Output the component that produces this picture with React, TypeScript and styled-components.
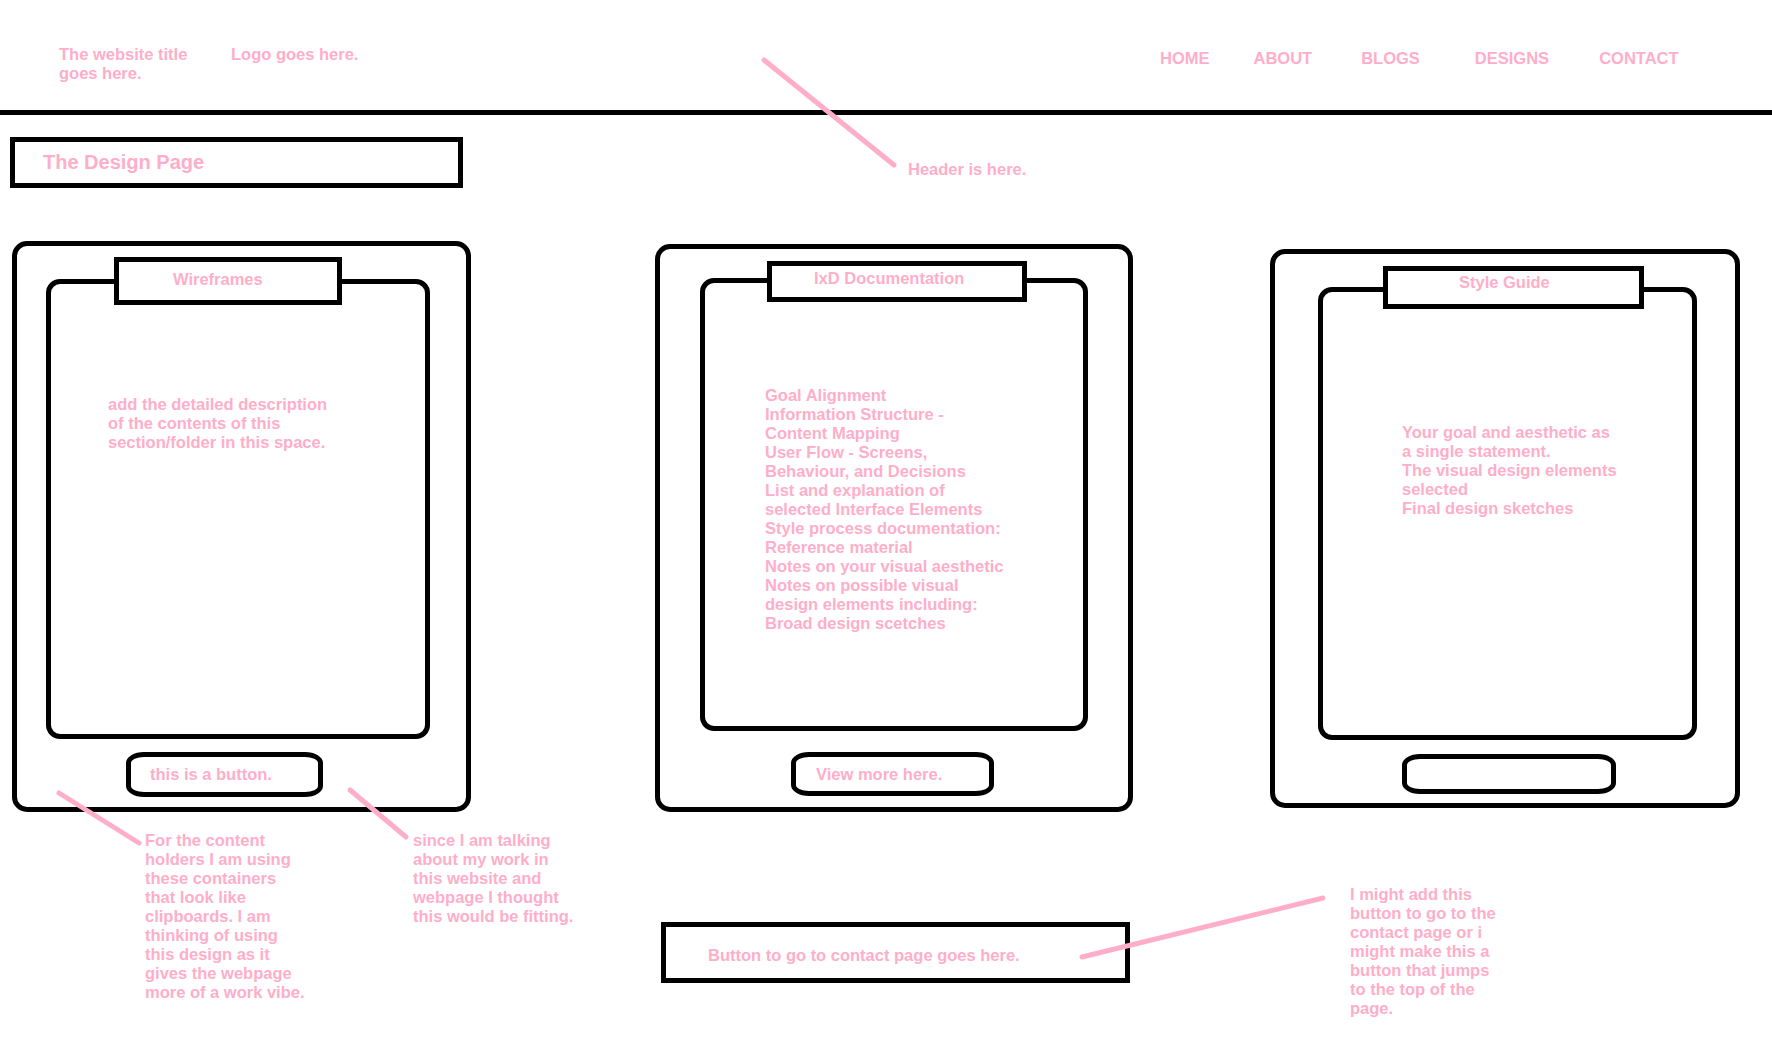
import React from "react";
import styled, { createGlobalStyle } from "styled-components";

const pink = "#ffaec9";

const GlobalStyle = createGlobalStyle`
  html, body {
    margin: 0;
    padding: 0;
    background: #fff;
  }
  body {
    font-family: "Liberation Sans", Arial, sans-serif;
    font-weight: 700;
    font-size: 16.5px;
    line-height: 19px;
    color: ${pink};
  }
`;

type CardData = {
  title: string;
  text: string;
  button: string;
  ml: number;
  mt: number;
  w: number;
  pt: number;
  pl: number;
  pb: number;
  tab: { ml: number; w: number; h: number; mb: number; pl: number; pt: number };
  panel: { w: number; h: number; pl: number; pt: number };
  btn: { mt: number; ml: number; w: number; h: number; pl: number };
};

const cards: CardData[] = [
  {
    title: "Wireframes",
    text: "add the detailed description\nof the contents of this\nsection/folder in this space.",
    button: "this is a button.",
    ml: 0, mt: 0, w: 459, pt: 11, pl: 29, pb: 10,
    tab: { ml: 68, w: 228, h: 48, mb: -26, pl: 54, pt: 8 },
    panel: { w: 384, h: 460, pl: 57, pt: 111 },
    btn: { mt: 13, ml: 80, w: 197, h: 45, pl: 19 },
  },
  {
    title: "IxD Documentation",
    text: "Goal Alignment\nInformation Structure -\nContent Mapping\nUser Flow - Screens,\nBehaviour, and Decisions\nList and explanation of\nselected Interface Elements\nStyle process documentation:\nReference material\nNotes on your visual aesthetic\nNotes on possible visual\ndesign elements including:\nBroad design scetches",
    button: "View more here.",
    ml: 184, mt: 3, w: 478, pt: 12, pl: 40, pb: 11,
    tab: { ml: 67, w: 260, h: 41, mb: -24, pl: 42, pt: 3 },
    panel: { w: 388, h: 453, pl: 60, pt: 103 },
    btn: { mt: 21, ml: 91, w: 203, h: 44, pl: 20 },
  },
  {
    title: "Style Guide",
    text: "Your goal and aesthetic as\na single statement.\nThe visual design elements\nselected\nFinal design sketches",
    button: "",
    ml: 137, mt: 8, w: 470, pt: 12, pl: 43, pb: 9,
    tab: { ml: 65, w: 261, h: 43, mb: -22, pl: 71, pt: 2 },
    panel: { w: 379, h: 453, pl: 79, pt: 131 },
    btn: { mt: 14, ml: 84, w: 214, h: 40, pl: 0 },
  },
];

const navItems = [
  { label: "HOME", space: 0 },
  { label: "ABOUT", space: 44 },
  { label: "BLOGS", space: 49 },
  { label: "DESIGNS", space: 55 },
  { label: "CONTACT", space: 50 },
];

const App = () => {
  return (
    <Page>
      <GlobalStyle />
      <Header>
        <SiteTitle>
          The website title
          <br />
          goes here.
        </SiteTitle>
        <Logo>Logo goes here.</Logo>
        <Nav>
          {navItems.map((item) => (
            <NavItem key={item.label} $space={item.space}>
              {item.label}
            </NavItem>
          ))}
        </Nav>
      </Header>

      <TitleRow>
        <PageTitle>The Design Page</PageTitle>
        <Note $ml={445} $mt={23}>
          Header is here.
        </Note>
      </TitleRow>

      <CardRow>
        {cards.map((c) => (
          <Card key={c.title} $ml={c.ml} $mt={c.mt} $w={c.w} $pt={c.pt} $pl={c.pl} $pb={c.pb}>
            <Tab {...prefix(c.tab)}>{c.title}</Tab>
            <Panel {...prefix(c.panel)}>{c.text}</Panel>
            <CardButton {...prefix(c.btn)}>{c.button}</CardButton>
          </Card>
        ))}
      </CardRow>

      <NotesRow>
        <Note $ml={145} $mt={19} $w={200}>
          {"For the content\nholders I am using\nthese containers\nthat look like\nclipboards. I am\nthinking of using\nthis design as it\ngives the webpage\nmore of a work vibe."}
        </Note>
        <Note $ml={68} $mt={19} $w={200}>
          {"since I am talking\nabout my work in\nthis website and\nwebpage I thought\nthis would be fitting."}
        </Note>
        <ContactButton>Button to go to contact page goes here.</ContactButton>
        <Note $ml={220} $mt={73} $w={200}>
          {"I might add this\nbutton to go to the\ncontact page or i\nmight make this a\nbutton that jumps\nto the top of the\npage."}
        </Note>
      </NotesRow>

      <Annotations viewBox="0 0 1772 1046" width={1772} height={1046}>
        <line x1={764} y1={60} x2={894} y2={165} />
        <line x1={59} y1={793} x2={139} y2={843} />
        <line x1={350} y1={790} x2={406} y2={837} />
        <line x1={1082} y1={957} x2={1323} y2={898} />
      </Annotations>
    </Page>
  );
};

export default App;

// turn { w: 1 } into { $w: 1 } for transient styled props
function prefix<T extends Record<string, number>>(o: T) {
  const out: Record<string, number> = {};
  Object.keys(o).forEach((k) => {
    out["$" + k] = o[k];
  });
  return out as any;
}

const Page = styled.div`
  position: relative;
  width: 1772px;
  min-height: 1046px;
  overflow: hidden;
`;

const Header = styled.header`
  display: flex;
  align-items: flex-start;
  box-sizing: border-box;
  height: 115px;
  padding-top: 45px;
  border-bottom: 5px solid #000;
`;

const SiteTitle = styled.div`
  margin-left: 59px;
  width: 172px;
`;

const Logo = styled.div`
  width: 160px;
  white-space: nowrap;
`;

const Nav = styled.nav`
  display: flex;
  margin-left: 769px;
  margin-top: 4px;
`;

const NavItem = styled.a<{ $space: number }>`
  margin-left: ${({ $space }) => $space}px;
  white-space: nowrap;
  cursor: pointer;
`;

const TitleRow = styled.section`
  display: flex;
  align-items: flex-start;
  margin-top: 22px;
  padding-left: 10px;
`;

const PageTitle = styled.h1`
  display: flex;
  align-items: center;
  box-sizing: border-box;
  width: 453px;
  height: 51px;
  margin: 0;
  padding: 0 0 0 28px;
  border: 5px solid #000;
  font-size: 20px;
  line-height: 23px;
  font-weight: 700;
`;

const Note = styled.p<{ $ml: number; $mt: number; $w?: number }>`
  margin: ${({ $mt }) => $mt}px 0 0 ${({ $ml }) => $ml}px;
  width: ${({ $w }) => ($w ? `${$w}px` : "auto")};
  white-space: pre-line;
  flex-shrink: 0;
`;

const CardRow = styled.section`
  display: flex;
  align-items: flex-start;
  margin-top: 53px;
  padding-left: 12px;
`;

const Card = styled.article<{
  $ml: number;
  $mt: number;
  $w: number;
  $pt: number;
  $pl: number;
  $pb: number;
}>`
  display: flex;
  flex-direction: column;
  align-items: flex-start;
  box-sizing: border-box;
  flex-shrink: 0;
  width: ${({ $w }) => $w}px;
  margin-left: ${({ $ml }) => $ml}px;
  margin-top: ${({ $mt }) => $mt}px;
  padding: ${({ $pt, $pl, $pb }) => `${$pt}px 0 ${$pb}px ${$pl}px`};
  border: 5px solid #000;
  border-radius: 15px;
`;

const Tab = styled.div<{ $ml: number; $w: number; $h: number; $mb: number; $pl: number; $pt: number }>`
  position: relative;
  z-index: 1;
  box-sizing: border-box;
  width: ${({ $w }) => $w}px;
  height: ${({ $h }) => $h}px;
  margin-left: ${({ $ml }) => $ml}px;
  margin-bottom: ${({ $mb }) => $mb}px;
  padding: ${({ $pt, $pl }) => `${$pt}px 0 0 ${$pl}px`};
  border: 5px solid #000;
  background: #fff;
  white-space: nowrap;
`;

const Panel = styled.div<{ $w: number; $h: number; $pl: number; $pt: number }>`
  box-sizing: border-box;
  width: ${({ $w }) => $w}px;
  height: ${({ $h }) => $h}px;
  padding: ${({ $pt, $pl }) => `${$pt}px 0 0 ${$pl}px`};
  border: 5px solid #000;
  border-radius: 14px;
  white-space: pre-line;
`;

const CardButton = styled.button<{ $mt: number; $ml: number; $w: number; $h: number; $pl: number }>`
  display: flex;
  align-items: center;
  box-sizing: border-box;
  width: ${({ $w }) => $w}px;
  height: ${({ $h }) => $h}px;
  margin: ${({ $mt, $ml }) => `${$mt}px 0 0 ${$ml}px`};
  padding: 0 0 0 ${({ $pl }) => $pl}px;
  border: 5px solid #000;
  border-radius: 18px / 11px;
  background: #fff;
  font: inherit;
  color: ${pink};
  cursor: pointer;
`;

const NotesRow = styled.section`
  display: flex;
  align-items: flex-start;
`;

const ContactButton = styled.button`
  display: flex;
  align-items: center;
  box-sizing: border-box;
  flex-shrink: 0;
  width: 469px;
  height: 61px;
  margin: 110px 0 0 48px;
  padding: 5px 0 0 42px;
  border: 5px solid #000;
  background: #fff;
  font: inherit;
  color: ${pink};
  cursor: pointer;
`;

const Annotations = styled.svg`
  position: absolute;
  top: 0;
  left: 0;
  pointer-events: none;

  line {
    stroke: ${pink};
    stroke-width: 5;
    stroke-linecap: round;
  }
`;
